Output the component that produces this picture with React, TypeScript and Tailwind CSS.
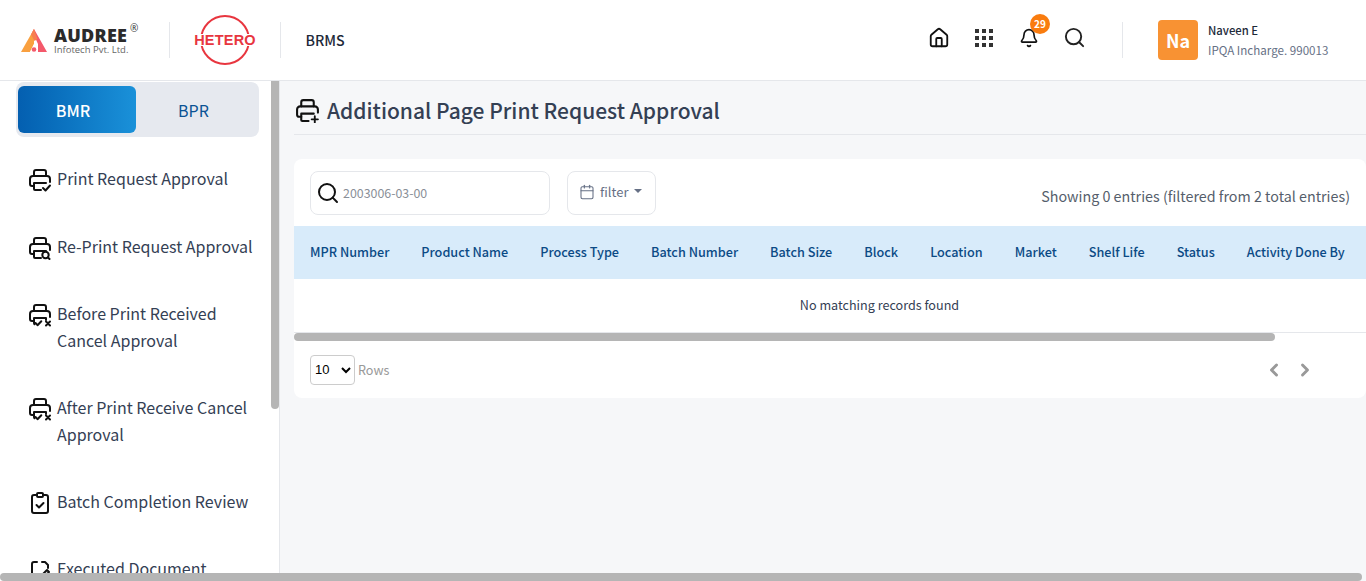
import { Bell, Calendar, ChevronLeft, ChevronRight, House, Search } from 'lucide-react';

const columns = [
  'MPR Number',
  'Product Name',
  'Process Type',
  'Batch Number',
  'Batch Size',
  'Block',
  'Location',
  'Market',
  'Shelf Life',
  'Status',
  'Activity Done By',
];

type Badge = 'check' | 'search' | 'checkx' | 'plus';

function PrinterIcon({ badge, className }: { badge: Badge; className?: string }) {
  return (
    <svg viewBox="0 0 24 24" fill="none" stroke="#111" strokeWidth="2" strokeLinecap="round" strokeLinejoin="round" className={className}>
      <path d="M6 8V4a2 2 0 0 1 2-2h8a2 2 0 0 1 2 2v4" />
      <path d="M6 18H4a2 2 0 0 1-2-2v-5a3 3 0 0 1 3-3h14a3 3 0 0 1 3 3v3" />
      {badge === 'checkx' ? (
        <path d="M6 15v5a2 2 0 0 0 .5 1.3M6 15h12v2" />
      ) : (
        <path d="M6 15h12M6 15v6a1 1 0 0 0 1 1h6" />
      )}
      {badge === 'check' && <path d="M15 20l2.5 2.5 4.5-5" />}
      {badge === 'plus' && <path d="M19 17.5v6M16 20.5h6" strokeWidth="1.8" />}
      {badge === 'search' && (
        <>
          <circle cx="17.5" cy="19" r="3.2" />
          <path d="M20 21.5l1.5 1.5" />
        </>
      )}
      {badge === 'checkx' && (
        <>
          <path d="M7.5 20l2 2.2 3.8-4" />
          <path d="M18 18.5l4 4M22 18.5l-4 4" />
        </>
      )}
    </svg>
  );
}

function ClipboardIcon() {
  return (
    <svg viewBox="0 0 24 24" fill="none" stroke="#111" strokeWidth="2" strokeLinecap="round" strokeLinejoin="round" className="w-6 h-6 shrink-0">
      <rect x="9" y="2" width="6" height="4" rx="1" />
      <path d="M9 4H6a2 2 0 0 0-2 2v14a2 2 0 0 0 2 2h12a2 2 0 0 0 2-2V6a2 2 0 0 0-2-2h-3" />
      <path d="M8.5 14l2.5 2.5 4.5-4.5" />
    </svg>
  );
}

function DocEditIcon() {
  return (
    <svg viewBox="0 0 24 24" fill="none" stroke="#111" strokeWidth="2" strokeLinecap="round" strokeLinejoin="round" className="w-6 h-6 shrink-0">
      <path d="M4 9V6a2 2 0 0 1 2-2h3M14 4h3l3 3v3" />
      <path d="M4 9v11a2 2 0 0 0 2 2h3" />
      <path d="M12 19l7-7 2 2-7 7h-2z" />
    </svg>
  );
}

function GridIcon() {
  const cells = [0, 7, 14];
  return (
    <svg viewBox="0 0 18 18" className="w-[18px] h-[18px]" fill="#333">
      {cells.map((y) => cells.map((x) => <rect key={`${x}-${y}`} x={x} y={y} width="4" height="4" />))}
    </svg>
  );
}

function AudreeLogo() {
  return (
    <div className="flex items-center w-[149px]">
      <svg viewBox="0 0 26 23" className="ml-px w-[26px] h-[23px] shrink-0">
        <path d="M13 0L0 23h9l4-8z" fill="#f9a03f" />
        <path d="M13 0l-1.5 3L17 15l0 8h9z" fill="#f4596b" />
        <path d="M13 0l-3 5.5 3.5 6.5 3-2z" fill="#f77f50" />
        <path d="M13 15l-4 8h8z" fill="#fff" />
        <circle cx="13" cy="20.5" r="2.3" fill="#f4596b" />
      </svg>
      <div className="ml-[7px] relative font-['Open_Sans',sans-serif]">
        <div className="text-[18px] leading-[18px] font-extrabold tracking-[0.2px] text-[#2b2b2b]">AUDREE</div>
        <div className="text-[9.5px] leading-[11px] text-[#666]">Infotech Pvt. Ltd.</div>
        <span className="absolute left-[76px] top-[-4px] text-[10px] leading-[12px] text-[#333]">®</span>
      </div>
    </div>
  );
}

function HeteroLogo() {
  return (
    <div className="relative w-[62px] h-[50px] flex items-center justify-center">
      <div className="w-[50px] h-[50px] rounded-full border-2 border-[#e8363f]" />
      <span className="absolute inset-0 flex items-center justify-center bg-transparent text-[14.5px] font-bold tracking-[0.2px] text-[#e8363f] font-['Liberation_Sans',sans-serif]">
        <span className="bg-white leading-[12px]">HETERO</span>
      </span>
    </div>
  );
}

function NavItem({ icon, children }: { icon: React.ReactNode; children: React.ReactNode }) {
  return (
    <div className="flex gap-[5px] items-start pl-7 pr-2">
      <div className="shrink-0 pt-[3px]">{icon}</div>
      <div className="text-[16px] leading-[27px] text-[#344054] w-[200px]">{children}</div>
    </div>
  );
}

export default function App() {
  return (
    <div className="relative h-[581px] w-[1366px] overflow-hidden bg-[#f6f7f9] font-['Noto_Sans_CJK_SC','Noto_Sans',sans-serif]">
      <header className="h-[81px] bg-white border-b border-[#e5e7eb] flex items-center pl-5 pr-[26px]">
        <AudreeLogo />
        <div className="w-px h-[36px] bg-[#e5e7eb]" />
        <div className="ml-[24px] mr-[24px]">
          <HeteroLogo />
        </div>
        <div className="w-px h-[36px] bg-[#e5e7eb] -ml-[0.5px]" />
        <div className="ml-[25px] pt-px text-[14.2px] font-medium text-[#1d2939]">BRMS</div>

        <div className="ml-auto flex items-center">
          <div className="flex items-center pb-[5px]">
            <House className="w-[22px] h-[22px] text-[#111]" strokeWidth={2} />
            <div className="ml-[25px]">
              <GridIcon />
            </div>
            <div className="relative ml-[26px]">
              <Bell className="w-[20px] h-[22px] text-[#111]" strokeWidth={2} />
              <span className="absolute left-[11px] top-[-13px] w-5 h-5 rounded-full bg-[#f97c0f] text-white text-[10px] font-bold flex items-center justify-center">29</span>
            </div>
            <Search className="ml-[24px] w-[23px] h-[23px] text-[#222]" strokeWidth={2} />
          </div>
          <div className="ml-[36px] w-px h-[36px] bg-[#e5e7eb]" />
          <div className="ml-[35px] w-10 h-10 rounded bg-[#f89233] text-white font-bold text-[18px] flex items-center justify-center">Na</div>
          <div className="ml-[10px] w-[132px]">
            <div className="text-[11.3px] leading-5 font-medium text-[#1d2939]">Naveen E</div>
            <div className="text-[11.6px] leading-5 text-[#667085]">IPQA Incharge. 990013</div>
          </div>
        </div>
      </header>

      <div className="flex h-[500px]">
        <aside className="relative w-[280px] shrink-0 bg-white border-r border-[#e5e7eb] overflow-hidden">
          <div className="ml-4 mt-px w-[243px] h-[55px] rounded-lg bg-[#e6e9ef] flex items-center pl-[2px]">
            <div className="w-[118px] h-[47px] pr-2 rounded-md bg-gradient-to-r from-[#045fb0] to-[#1a91d9] text-white text-[16px] font-medium flex items-center justify-center">BMR</div>
            <div className="w-[115px] text-center text-[16px] text-[#0b5394]">BPR</div>
          </div>
          <nav className="mt-[28.4px] flex flex-col gap-[40.2px]">
            <NavItem icon={<PrinterIcon badge="check" className="w-6 h-6" />}>Print Request Approval</NavItem>
            <NavItem icon={<PrinterIcon badge="search" className="w-6 h-6" />}>Re-Print Request Approval</NavItem>
            <NavItem icon={<PrinterIcon badge="checkx" className="w-6 h-6" />}>Before Print Received Cancel Approval</NavItem>
            <NavItem icon={<PrinterIcon badge="checkx" className="w-6 h-6" />}>After Print Receive Cancel Approval</NavItem>
            <NavItem icon={<ClipboardIcon />}>Batch Completion Review</NavItem>
            <NavItem icon={<DocEditIcon />}>Executed Document Review</NavItem>
          </nav>
          <div className="absolute right-0 top-0 w-2 h-[328px] rounded-b bg-[#b5b5b5]" />
        </aside>

        <main className="flex-1 min-w-0 pl-[14px]">
          <div className="h-[54px] pt-[6px] border-b border-[#e5e7eb] flex items-center gap-[7px]">
            <PrinterIcon badge="plus" className="w-[25px] h-[25px] ml-px" />
            <h1 className="text-[21px] font-medium text-[#344054]">Additional Page Print Request Approval</h1>
          </div>

          <section className="mt-6 h-[239px] bg-white rounded-lg overflow-hidden">
            <div className="h-[67px] flex items-start px-4 pt-3">
              <div className="w-[240px] h-[44px] border border-[#e5e7eb] rounded-lg flex items-center pl-[5px] gap-[3px]">
                <Search className="w-[24px] h-[24px] text-[#111]" strokeWidth={2} />
                <span className="text-[12.4px] text-[#8a8f98]">2003006-03-00</span>
              </div>
              <button className="ml-[17px] w-[89px] h-[44px] border border-[#e5e7eb] rounded-lg flex items-center pl-[11px] pb-[2px] text-[13px] text-[#667085]">
                <Calendar className="w-4 h-4" strokeWidth={1.6} />
                <span className="ml-[5px]">filter</span>
                <span className="ml-[6px] mb-[2px] border-x-4 border-x-transparent border-t-[4px] border-t-[#667085]" />
              </button>
              <div className="ml-auto mt-[13px] text-[14.3px] leading-[24px] text-[#555e6b]">Showing 0 entries (filtered from 2 total entries)</div>
            </div>

            <div className="overflow-hidden">
              <div className="w-[1171px]">
                <div className="h-[53px] pb-[2px] bg-[#d8ebfa] flex items-center gap-8 px-4 whitespace-nowrap">
                  {columns.map((c) => (
                    <div key={c} className="text-[12.68px] font-medium text-[#0b4a85]">
                      {c}
                    </div>
                  ))}
                </div>
                <div className="h-[54px] border-b border-[#e5e7eb] flex items-center justify-center text-[12.6px] text-[#344054]">No matching records found</div>
              </div>
            </div>
            <div className="h-2 w-[981px] rounded-full bg-[#b5b5b5]" />

            <div className="h-[57px] flex items-center px-4">
              <select className="w-[45px] h-[30px] border border-[#ccc] rounded text-[13px] text-black bg-white font-['Liberation_Sans',sans-serif]">
                <option>10</option>
                <option>25</option>
                <option>50</option>
              </select>
              <span className="ml-[3px] pt-px text-[12.6px] text-[#999]">Rows</span>
              <div className="ml-auto flex items-center gap-[11px] pr-[35px] text-[#999]">
                <ChevronLeft className="w-5 h-5" strokeWidth={3.5} />
                <ChevronRight className="w-5 h-5" strokeWidth={3.5} />
              </div>
            </div>
          </section>
        </main>
      </div>

      <div className="absolute left-0 bottom-0 w-[1362px] h-2 rounded-full bg-[#b5b5b5]" />
    </div>
  );
}
